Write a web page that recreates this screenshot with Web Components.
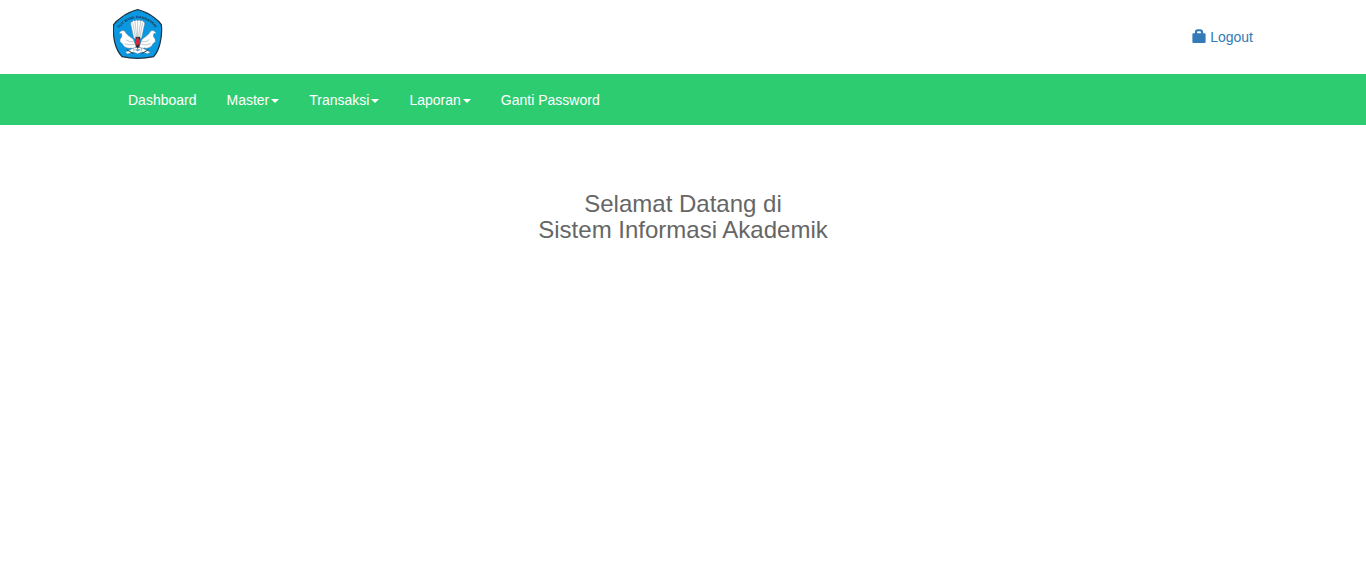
<!DOCTYPE html>
<html lang="id">
<head>
<meta charset="utf-8">
<title>Sistem Informasi Akademik</title>
<style>
body{margin:0;background:#fff;font:14px/20px "Liberation Sans",Arial,sans-serif;color:#333}
</style>
</head>
<body>
<app-header>
  <school-logo></school-logo>
  <logout-link slot="actions">Logout</logout-link>
</app-header>
<nav-bar>
  <nav-item>Dashboard</nav-item>
  <nav-item menu>Master</nav-item>
  <nav-item menu>Transaksi</nav-item>
  <nav-item menu>Laporan</nav-item>
  <nav-item>Ganti Password</nav-item>
</nav-bar>
<welcome-title>Selamat Datang di<br>Sistem Informasi Akademik</welcome-title>
<script>
const define = (name, html) => customElements.define(name, class extends HTMLElement {
  constructor() {
    super();
    this.attachShadow({mode: 'open'}).innerHTML = html;
  }
});

define('app-header', `<style>
:host{display:block;height:74px}
.container{box-sizing:border-box;width:1170px;margin:0 auto;padding:9px 15px 0;display:flex;justify-content:space-between}
</style><div class="container"><slot></slot><slot name="actions"></slot></div>`);

define('school-logo', `<style>
:host{display:block;width:50px;height:50px}
svg{display:block}
text{font:bold 11px "Liberation Sans",Arial,sans-serif;fill:#14324a}
</style>
<svg width="50" height="50" viewBox="15 15 150 150">
  <path d="M89 17Q117 24 139 41Q152 50 160 62Q163 86 157 114Q151 142 137 158Q113 163 89 163Q65 163 42 158Q27 142 20 114Q14 86 17 62Q25 50 39 41Q61 24 89 17Z" fill="#0b98e2" stroke="#1d3442" stroke-width="3.6"/>
  <path id="motto" d="M34 74Q57 43 89 43Q121 43 146 76" fill="none"/>
  <text textLength="128" lengthAdjust="spacingAndGlyphs"><textPath href="#motto">TUT WURI HANDAYANI</textPath></text>
  <g fill="#fff" stroke="#5d7a88" stroke-width="1.4" stroke-linejoin="round">
    <path d="M35 85Q42 76 50 81Q54 89 60 94L76 106L84 128L78 135Q68 130 63 133Q46 130 44 120L36 113Q34 105 41 99Q43 93 40 88L34 90Z"/>
    <path d="M143 85Q136 76 128 81Q124 89 118 94L102 106L94 128L100 135Q110 130 115 133Q132 130 134 120L142 113Q144 105 137 99Q135 93 138 88L144 90Z"/>
    <path d="M77 101L68 60Q67 53 73 53Q75 47 81 51Q85 46 89 50Q94 46 98 51Q104 47 106 53Q112 54 110 60L101 101L95 106H83Z"/>
    <path d="M52 145L76 132L89 141L103 132L127 145L119 149L103 144L89 149L75 144L59 150Z"/>
    <path d="M77 132Q89 127 101 132V139Q89 134 77 139Z"/>
  </g>
  <g fill="none" stroke="#71858e" stroke-width="1.3">
    <path d="M74 56L82 98M81 53L86 97M89 52V98M98 53L92 97M104 56L96 98"/>
    <path d="M54 107Q64 116 76 113M50 119Q64 125 78 121M124 107Q114 116 102 113M128 119Q114 125 100 121"/>
  </g>
  <path d="M82 98H97L94 127L89 135L84 127Z" fill="#35343a"/>
  <path d="M89 100Q76 112 86 123Q102 120 95 108Q92 107 89 100Z" fill="#d92738"/>
  <path d="M56 137L77 149M122 137L101 149" stroke="#333f48" stroke-width="3"/>
</svg>`);

define('logout-link', `<style>
:host{display:flex;height:20px;margin-top:18px;color:#337ab7}
svg{width:14px;height:14px;margin:2px 4.5px 0 0}
</style>
<svg viewBox="0 0 14 14"><path d="M2.9 4.2V3Q2.9.2 5.8.2H8.2Q11.1.2 11.1 3V4.2H12.6Q13.6 4.2 13.6 5.2V13Q13.6 14 12.6 14H1.4Q.4 14 .4 13V5.2Q.4 4.2 1.4 4.2ZM5.1 4.2H8.9V3.2Q8.9 2.2 8 2.2H6Q5.1 2.2 5.1 3.2Z" fill="currentColor"/></svg><slot></slot>`);

define('nav-bar', `<style>
:host{display:block;height:51px;background:#2ecc71}
nav{box-sizing:border-box;width:1170px;margin:0 auto;padding:0 15px;display:flex}
</style><nav><slot></slot></nav>`);

define('nav-item', `<style>
:host{display:flex;padding:16px 15px 15px;color:#fff;white-space:nowrap}
i{display:none;margin:9px 0 0 2px;width:0;height:0;border:4px solid transparent;border-top-color:#fff;border-bottom:0}
:host([menu]) i{display:block}
</style><slot></slot><i></i>`);

define('welcome-title', `<style>
:host{display:block;margin-top:66px;text-align:center;font-size:24px;line-height:26.4px;color:#666}
</style><slot></slot>`);
</script>
</body>
</html>
